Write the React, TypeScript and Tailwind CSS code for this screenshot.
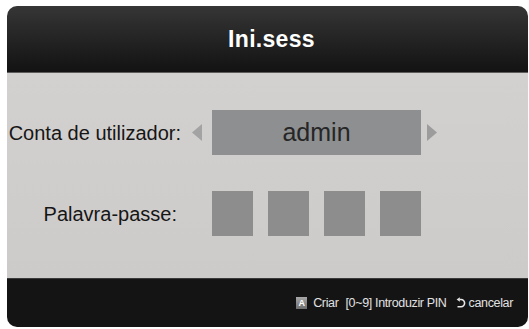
import React from 'react';

const font = { fontFamily: '"Liberation Sans", Arial, sans-serif' };

const ReturnIcon = () => (
  <svg width="10" height="12" viewBox="0 0 10 12" className="shrink-0">
    <path d="M3.5 2.5 H5 A3.6 3.6 0 0 1 5 9.7 H1.5" fill="none" stroke="#e6e6e6" strokeWidth="1.6" />
    <path d="M0.6 2.5 L3.8 0.2 L3.8 4.8 Z" fill="#e6e6e6" />
  </svg>
);

const Arrow = ({ dir }: { dir: 'left' | 'right' }) => (
  <svg width="10" height="17" viewBox="0 0 10 17" className="shrink-0">
    {dir === 'left' ? (
      <path d="M10 0 L0 8.5 L10 17 Z" fill="#a3a3a3" />
    ) : (
      <path d="M0 0 L10 8.5 L0 17 Z" fill="#9c9c9c" />
    )}
  </svg>
);

export default function App() {
  return (
    <div className="w-[529px] h-[329px] bg-white pt-[6px] pl-[7px] overflow-hidden" style={font}>
      <div className="w-[521px] h-[321px] rounded-[10px] overflow-hidden flex flex-col">
        {/* header */}
        <div className="h-[67px] shrink-0 flex items-center justify-center pl-[8px] bg-gradient-to-b from-[#363636] to-[#131313] border-b border-[#5c5c5c]">
          <span className="text-white font-bold text-[23px] tracking-[0.3px]">Ini.sess</span>
        </div>

        {/* body */}
        <div className="flex-1 bg-gradient-to-b from-[#d3d1cf] to-[#cdcbc9] flex flex-col pt-[37px]">
          <div className="flex items-center h-[45px]">
            <div className="w-[174px] flex justify-end shrink-0">
              <span className="whitespace-nowrap text-[20px] text-[#161616]">Conta de utilizador:</span>
            </div>
            <div className="ml-[11px]"><Arrow dir="left" /></div>
            <div className="ml-[10px] w-[209px] h-[45px] bg-[#8e8f90] flex items-center justify-center">
              <span className="text-[25px] text-[#262626]">admin</span>
            </div>
            <div className="ml-[6px]"><Arrow dir="right" /></div>
          </div>

          <div className="flex items-center h-[45px] mt-[36px]">
            <div className="w-[174px] flex justify-end shrink-0 pr-[4px]">
              <span className="whitespace-nowrap text-[20px] text-[#161616]">Palavra-passe:</span>
            </div>
            <div className="ml-[31px] flex gap-[15px]">
              <div className="w-[41px] h-[45px] bg-[#8d8d8d]" />
              <div className="w-[41px] h-[45px] bg-[#8d8d8d]" />
              <div className="w-[41px] h-[45px] bg-[#8d8d8d]" />
              <div className="w-[41px] h-[45px] bg-[#8d8d8d]" />
            </div>
          </div>
        </div>

        {/* footer */}
        <div className="h-[49px] shrink-0 bg-[#141414] border-t border-[#3a3a3a] flex items-center justify-end pr-[15px] text-[12.5px] tracking-[-0.35px] text-[#e2e2e2]">
          <span className="w-[11px] h-[12px] bg-gradient-to-b from-[#a8a8a8] to-[#6e6e6e] text-white text-[9px] font-bold leading-[12px] text-center tracking-normal mr-[6px]">A</span>
          <span className="mr-[7px]">Criar</span>
          <span className="mr-[9px]">[0~9] Introduzir PIN</span>
          <span className="mr-[3px]"><ReturnIcon /></span>
          <span>cancelar</span>
        </div>
      </div>
    </div>
  );
}
